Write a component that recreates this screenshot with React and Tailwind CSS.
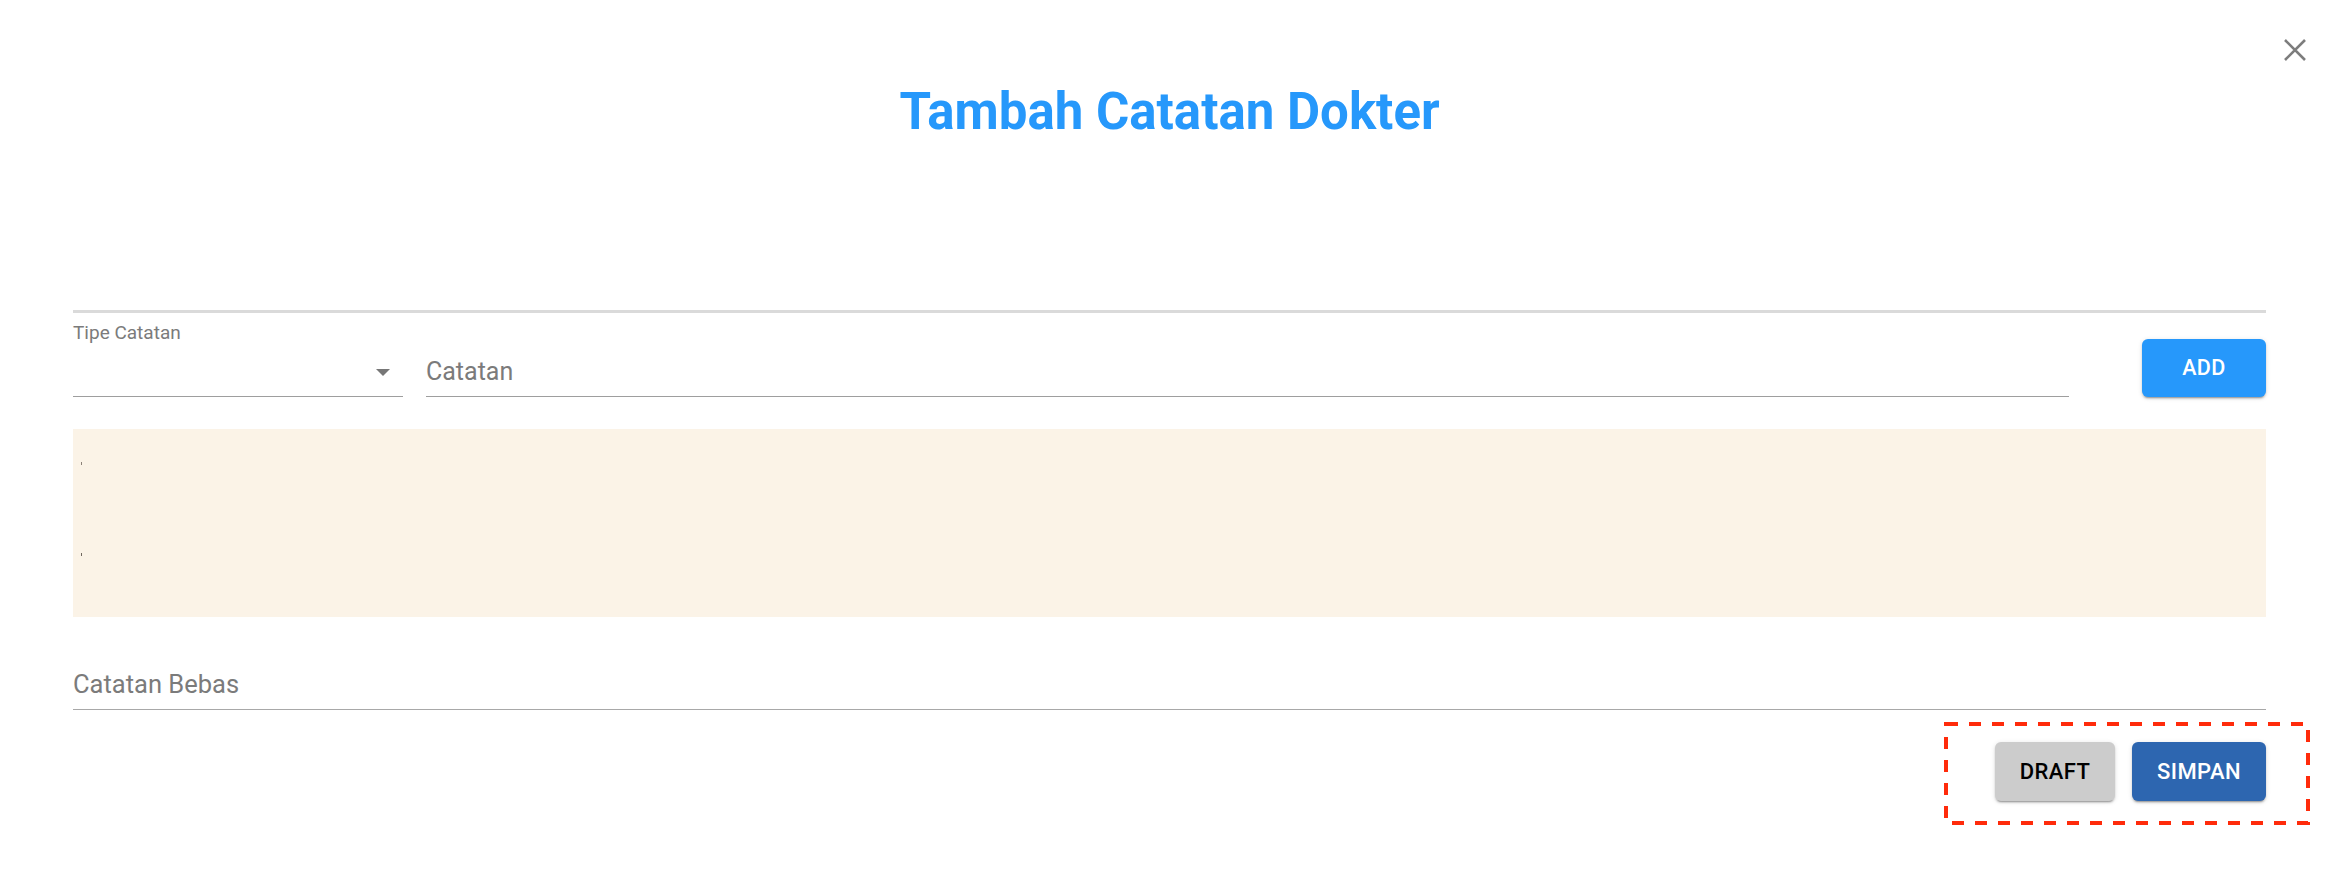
import React from "react";

export default function App() {
  const btnShadow =
    "shadow-[0_3px_1px_-2px_rgba(0,0,0,0.2),0_2px_2px_0_rgba(0,0,0,0.14),0_1px_5px_0_rgba(0,0,0,0.12)]";
  return (
    <div className="relative w-[2342px] h-[874px] bg-white font-['Roboto',_'Liberation_Sans',_sans-serif] overflow-hidden">
      <button className="absolute left-[2283px] top-[38px] w-[24px] h-[24px] flex items-center justify-center">
        <svg width="24" height="24" viewBox="0 0 24 24">
          <path d="M2 2 L22 22 M22 2 L2 22" stroke="#7d7d7d" strokeWidth="2.6" />
        </svg>
      </button>

      <div className="pl-[73px] pr-[76px]">
        <h1 className="pt-[81px] text-center text-[51px] leading-[61px] font-bold text-[#2698fb]">
          Tambah Catatan Dokter
        </h1>

        <div className="mt-[168px] h-[3px] bg-[#dadada]" />

        <div className="mt-[10px] flex items-end">
          <div className="w-[330px] flex flex-col">
            <div className="text-[19px] leading-[20px] text-[#7b7b7b]">Tipe Catatan</div>
            <div className="h-[54px] border-b border-[#9e9e9e] flex justify-end pr-[13px] pt-[26px]">
              <svg width="14" height="7" viewBox="0 0 14 7">
                <polygon points="0,0 14,0 7,7" fill="#777777" />
              </svg>
            </div>
          </div>
          <div className="ml-[23px] flex-1 border-b border-[#9e9e9e] pb-[10px]">
            <div className="text-[25px] leading-[28px] text-[#7b7b7b]">Catatan</div>
          </div>
          <button
            className={`ml-[73px] w-[124px] h-[58px] rounded-md bg-[#2698fb] text-white text-[21.5px] font-medium tracking-[0.02em] flex items-center justify-center ${btnShadow}`}
          >
            ADD
          </button>
        </div>

        <div className="mt-[32px] h-[188px] bg-[#fbf3e7] pl-[8px] pt-[33px] flex flex-col">
          <span className="block w-[1px] h-[3px] bg-[#8b8178]" />
          <span className="block w-[1px] h-[3px] bg-[#6f665e] mt-[88px]" />
        </div>

        <div className="mt-[53px] border-b border-[#a8a8a8] pb-[11px]">
          <div className="text-[25.5px] leading-[28px] text-[#7b7b7b]">Catatan Bebas</div>
        </div>

        <div className="mt-[32px] flex justify-end gap-[17px]">
          <button
            className={`w-[120px] h-[59px] rounded-md bg-[#cccccc] text-black text-[22px] font-medium tracking-[0.02em] flex items-center justify-center ${btnShadow}`}
          >
            DRAFT
          </button>
          <button
            className={`w-[134px] h-[59px] rounded-md bg-[#2d66b0] text-white text-[22px] font-medium tracking-[0.02em] flex items-center justify-center ${btnShadow}`}
          >
            SIMPAN
          </button>
        </div>
      </div>

      <svg
        className="absolute left-[1944px] top-[722px] pointer-events-none"
        width="366"
        height="103"
        viewBox="0 0 366 103"
      >
        <rect
          x="2"
          y="2"
          width="362"
          height="99"
          fill="none"
          stroke="#ff2b0b"
          strokeWidth="4"
          strokeDasharray="12 11"
        />
      </svg>
    </div>
  );
}
